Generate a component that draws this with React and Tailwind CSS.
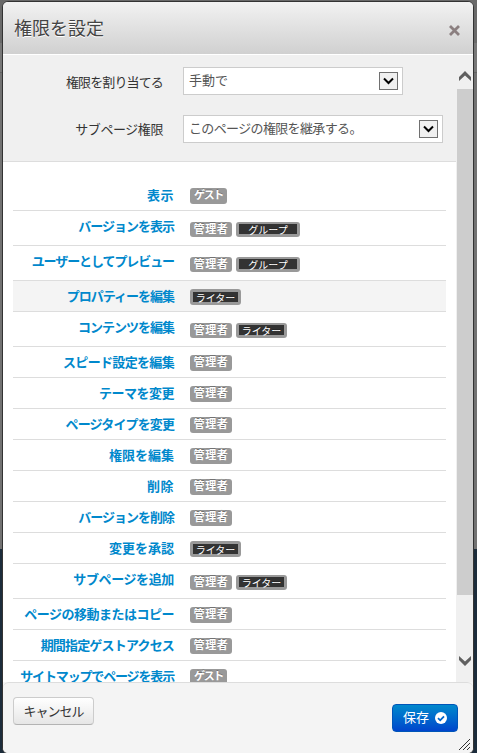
import React from "react";

const MODES = { manual: '手動で', inherit: 'このページの権限を継承する。' };

const ROWS = [
    { label: '表示', width: 27, tags: ['guest'] },
    { label: 'バージョンを表示', width: 96, tags: ['admin', 'group'] },
    { label: 'ユーザーとしてプレビュー', width: 143, tags: ['admin', 'group'] },
    { label: 'プロパティーを編集', width: 108, tags: ['writer'], active: true },
    { label: 'コンテンツを編集', width: 96, tags: ['admin', 'writer'] },
    { label: 'スピード設定を編集', width: 111, tags: ['admin'] },
    { label: 'テーマを変更', width: 75, tags: ['admin'] },
    { label: 'ページタイプを変更', width: 109, tags: ['admin'] },
    { label: '権限を編集', width: 65, tags: ['admin'] },
    { label: '削除', width: 27, tags: ['admin'] },
    { label: 'バージョンを削除', width: 96, tags: ['admin'] },
    { label: '変更を承認', width: 65, tags: ['writer'] },
    { label: 'サブページを追加', width: 101, tags: ['admin', 'writer'] },
    { label: 'ページの移動またはコピー', width: 150, tags: ['admin'] },
    { label: '期間指定ゲストアクセス', width: 134, tags: ['admin'] },
    { label: 'サイトマップでページを表示', width: 154, tags: ['guest'] },
];

const TAGS = {
    guest: { text: 'ゲスト', box: 'w-[37px]', width: 29 },
    admin: { text: '管理者', box: 'w-[42px]', width: 35 },
    group: { text: 'グループ', box: 'w-[64px]', width: 40, dark: true },
    writer: { text: 'ライター', box: 'w-[51px]', width: 40, dark: true },
};

// spreads the characters evenly over the given width
const Fit = ({ children, width, size }) => {
    const spacing = width / children.length - size;
    return <span className="whitespace-nowrap" style={{ letterSpacing: `${spacing}px` }}>{children}</span>;
};

const Tag = ({ name, short }) => {
    const tag = TAGS[name];
    return (
        <span className={`${tag.box} ${short ? 'h-[15px]' : 'h-4'} flex shrink-0 rounded-[3px] bg-[#999] text-white [text-shadow:0_-1px_0_rgba(0,0,0,0.25)]`}>
            {tag.dark ? (
                <span className={`flex-1 mx-[3px] ${short ? 'mt-[2px] mb-[3px]' : 'my-[3px]'} bg-[#333] text-center text-[10px] leading-[11px]`}>
                    <Fit width={tag.width} size={10}>{tag.text}</Fit>
                </span>
            ) : (
                <span className="flex-1 text-center text-[11px] font-bold leading-[13px]">
                    <Fit width={tag.width} size={11}>{tag.text}</Fit>
                </span>
            )}
        </span>
    );
};

const Row = ({ label, width, tags, active }) => {
    const tall = tags.length > 1;
    return (
        <div className={`flex shrink-0 gap-4 border-b border-[#ddd] ${tall ? 'h-[35px] ' : 'h-[31px]'} ${active ? 'bg-[#f4f4f4]' : ''}`}>
            <div className="w-[161px] text-right font-bold text-[13px] leading-[30px] text-[#0088cc]">
                <Fit width={width} size={13}>{label}</Fit>
            </div>
            <div className={`flex gap-1 ${tall ? 'pt-[11px]' : 'pt-2'}`}>
                {tags.map((name) => <Tag key={name} name={name} short={tall} />)}
            </div>
        </div>
    );
};

const Select = ({ box, width, children }) => (
    <div className={`${box} h-7 flex items-center justify-between border border-[#ccc] bg-white pl-[5px] pr-1 text-[13px] text-[#555]`}>
        <span className="pb-[2px]">
            <Fit width={width} size={13}>{children}</Fit>
        </span>
        <span className="w-[19px] h-[18px] shrink-0 flex items-center justify-center border border-[#707070] bg-[#f0f0f0]">
            <svg width="11" height="8" viewBox="0 0 11 8" fill="none" stroke="#000" strokeWidth="2">
                <path d="M1 1.5 5.5 6 10 1.5" />
            </svg>
        </span>
    </div>
);

const App = () => {
    return (
        <div className="relative w-[477px] h-[753px] overflow-hidden flex flex-col bg-[#6d6d6d] font-['Noto_Sans_CJK_JP','Liberation_Sans',sans-serif]">
            <div className="h-[43px] shrink-0 bg-[#696969]" />
            <div className="h-[30px] shrink-0 bg-[#777] border-b border-[#626262]" />
            <div className="h-[476px] shrink-0 bg-[#727272]" />
            <div className="flex-1 bg-[#1c2c3b]" />

            <div className="absolute left-[2px] top-[1px] w-[472px] h-[753px] flex flex-col overflow-hidden rounded-[6px] border border-[#333] bg-[#f4f4f4]">
                <div className="h-[52px] shrink-0 flex justify-between pl-[11px] pr-[13px] bg-linear-to-b from-[#f2f2f2] to-[#d0d0d0]">
                    <h3 className="text-[18px] leading-[51px] text-[#444] [text-shadow:0_1px_0_#fff]">
                        <Fit width={90} size={18}>権限を設定</Fit>
                    </h3>
                    <svg className="mt-[23px]" width="11" height="11" viewBox="0 0 11 11" stroke="#8b7f80" strokeWidth="2.8">
                        <path d="M1 1 10 10M10 1 1 10" />
                    </svg>
                </div>
                <div className="h-[628px] shrink-0 flex border-t border-white">
                    <div className="flex-1 flex flex-col overflow-hidden bg-white">
                        <div className="h-[107px] shrink-0 flex flex-col gap-[19px] border-b border-[#ddd] bg-[#f0f0f0] pt-3">
                            <div className="flex gap-[20px]">
                                <label className="w-[160px] text-right text-[13px] leading-[29px] text-[#333]">
                                    <Fit width={97} size={13}>権限を割り当てる</Fit>
                                </label>
                                <Select box="w-[220px]" width={39}>{MODES.manual}</Select>
                            </div>
                            <div className="flex gap-[20px]">
                                <label className="w-[160px] text-right text-[13px] leading-[28px] text-[#333]">
                                    <Fit width={88} size={13}>サブページ権限</Fit>
                                </label>
                                <Select box="w-[260px]" width={173}>{MODES.inherit}</Select>
                            </div>
                        </div>
                        <div className="flex flex-col pt-[18px] px-[10px]">
                            {ROWS.map((row) => <Row key={row.label} {...row} />)}
                        </div>
                    </div>
                    <div className="w-[17px] shrink-0 flex flex-col items-center bg-[#f0f0f0]">
                        <svg className="mt-[16px] shrink-0" width="12" height="10" viewBox="0 0 12 10" fill="#606060">
                            <path d="M0 6 6 0l6 6v4L6 4.500 0 10z" />
                        </svg>
                        <div className="mt-2 ml-px w-4 h-[506px] shrink-0 bg-[#cdcdcd]" />
                        <svg className="mt-[61px] shrink-0" width="12" height="10" viewBox="0 0 12 10" fill="#606060">
                            <path d="M0 4 6 10l6-6V0L6 5.500 0 0z" />
                        </svg>
                    </div>
                </div>
                <div className="relative flex-1 flex justify-between items-start rounded-t-[6px] border-t border-[#ddd] bg-[#f4f4f4] pl-[10px] pr-[15px]">
                    <button className="mt-[14px] w-[81px] h-[28px] rounded-[4px] border border-[#ccc] border-b-[#b3b3b3] bg-linear-to-b from-white to-[#e6e6e6] text-[13px] leading-[26px] text-[#333]">
                        <Fit width={60} size={13}>キャンセル</Fit>
                    </button>
                    <button className="mt-[21px] w-[66px] h-[28px] flex items-center justify-center gap-[6px] rounded-[4px] border border-[#0055b8] bg-linear-to-b from-[#0088cc] to-[#0044cc] text-[13px] text-white">
                        <span className="pb-[2px]">
                            <Fit width={26} size={13}>保存</Fit>
                        </span>
                        <svg width="12" height="12" viewBox="0 0 12 12">
                            <circle cx="6" cy="6" r="6" fill="#fff" />
                            <path d="M3 6.200 5.200 8.300 9 4.300" fill="none" stroke="#0066cc" strokeWidth="1.800" />
                        </svg>
                    </button>
                    <svg className="absolute right-[3px] bottom-[3px]" width="11" height="11" viewBox="0 0 11 11" stroke="#333" strokeWidth="1">
                        <path d="M0 11 11 0M4 11l7-7M8 11l3-3" />
                    </svg>
                </div>
            </div>
        </div>
    );
};

export default App;
